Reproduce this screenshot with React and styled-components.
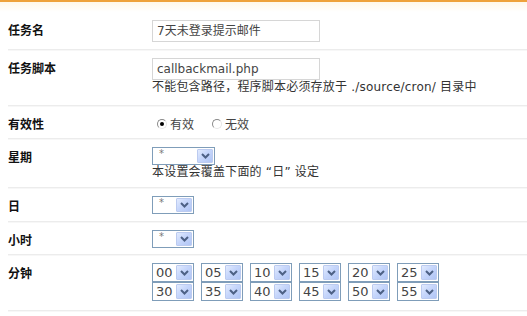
import React from 'react';
import styled, { createGlobalStyle } from 'styled-components';

const GlobalStyle = createGlobalStyle`
  html, body {
    margin: 0;
    padding: 0;
    background: #fff;
  }
  body {
    font-family: "DejaVu Sans", "Noto Sans CJK SC", sans-serif;
    font-size: 12px;
    line-height: 15px;
    color: #333;
  }
`;

const Page = styled.div`
  border-top: 2px solid #eea23c;
`;

const HeadBand = styled.div`
  height: 10px;
  background: linear-gradient(#fff8ea, #fff);
`;

const Form = styled.div`
  margin-left: 8px;
`;

const Row = styled.div`
  display: grid;
  grid-template-columns: 144px 1fr;
  align-items: start;
  padding: 8px 0 ${p => p.$pb || 7}px;
  border-top: ${p => (p.$first ? 'none' : '1px solid #ececec')};
  box-shadow: ${p => (p.$first ? 'none' : 'inset 0 1px 0 #f7f7f7')};
`;

const Label = styled.div`
  font-family: "Noto Sans CJK SC", sans-serif;
  font-weight: 700;
  font-size: 12px;
  line-height: 14px;
  height: 14px;
  color: #111;
  padding-top: 3px;
`;

const Value = styled.div`
  display: flex;
  flex-direction: column;
  align-items: flex-start;
`;

const TextInput = styled.div`
  box-sizing: border-box;
  width: 168px;
  height: 22px;
  border: 1px solid #d6d6d6;
  padding: 0 4px;
  font-family: "DejaVu Sans", "Noto Sans CJK SC", sans-serif;
  font-size: 12px;
  line-height: 20px;
  color: #444;
  white-space: nowrap;
`;

const Note = styled.div`
  font-family: "DejaVu Sans", "Noto Sans CJK SC", sans-serif;
  font-size: 12px;
  line-height: 15px;
  height: 15px;
  color: #333;
  white-space: nowrap;
  letter-spacing: 0.2px;
`;

const RadioGroup = styled.div`
  display: flex;
  align-items: center;
  gap: 18px;
  margin-left: 5px;
  padding-top: 2px;
  height: 15px;
`;

const RadioItem = styled.label`
  display: flex;
  align-items: center;
  gap: 3px;
  font-family: "Noto Sans CJK SC", sans-serif;
  font-size: 12px;
  line-height: 14px;
  height: 14px;
  color: #444;
`;

const RadioDot = styled.span`
  position: relative;
  box-sizing: border-box;
  width: 10px;
  height: 10px;
  border-radius: 50%;
  border: 1px solid;
  border-color: #8a8a8a #e6e6e6 #e6e6e6 #8a8a8a;
  background: #fff;
  &::after {
    content: '';
    display: ${p => (p.$on ? 'block' : 'none')};
    position: absolute;
    left: 2px;
    top: 2px;
    width: 4px;
    height: 4px;
    border-radius: 50%;
    background: #000;
  }
`;

const SelectBox = styled.div`
  box-sizing: border-box;
  width: ${p => p.$w}px;
  height: ${p => p.$h}px;
  border: 1px solid #7f9db9;
  background: #fff;
  display: flex;
  align-items: stretch;
  padding: 1px;
`;

const SelectText = styled.span`
  flex: 1;
  font-family: "DejaVu Sans", sans-serif;
  font-size: ${p => (p.$big ? 13 : 10)}px;
  line-height: ${p => (p.$big ? 15 : 9)}px;
  color: ${p => (p.$big ? '#444' : '#777')};
  padding-left: ${p => (p.$big ? 2 : 5)}px;
`;

const ArrowBtn = styled.span`
  box-sizing: border-box;
  width: 16px;
  border: 1px solid #bccbf0;
  border-radius: 1px;
  background: linear-gradient(135deg, #e2ebfe 0%, #c6d6fb 45%, #b0c5f5 100%);
  display: flex;
  align-items: center;
  justify-content: center;
`;

const MinuteGrid = styled.div`
  display: grid;
  grid-template-columns: repeat(6, 42px);
  column-gap: 7px;
  row-gap: 0;
`;

function Chevron() {
  return (
    <svg width="9" height="6" viewBox="0 0 9 6">
      <path d="M1 1 L4.5 4.5 L8 1" fill="none" stroke="#4d6185" strokeWidth="2" />
    </svg>
  );
}

function Select({ w, h, value, big }) {
  return (
    <SelectBox $w={w} $h={h}>
      <SelectText $big={big}>{value}</SelectText>
      <ArrowBtn>
        <Chevron />
      </ArrowBtn>
    </SelectBox>
  );
}

const minutes = ['00', '05', '10', '15', '20', '25', '30', '35', '40', '45', '50', '55'];

export default function App() {
  return (
    <Page>
      <GlobalStyle />
      <HeadBand />
      <Form>
        <Row $first>
          <Label>任务名</Label>
          <Value>
            <TextInput>7天未登录提示邮件</TextInput>
          </Value>
        </Row>
        <Row $pb={10}>
          <Label>任务脚本</Label>
          <Value>
            <TextInput>callbackmail.php</TextInput>
            <Note>不能包含路径，程序脚本必须存放于 ./source/cron/ 目录中</Note>
          </Value>
        </Row>
        <Row>
          <Label>有效性</Label>
          <Value>
            <RadioGroup>
              <RadioItem><RadioDot $on />有效</RadioItem>
              <RadioItem><RadioDot />无效</RadioItem>
            </RadioGroup>
          </Value>
        </Row>
        <Row>
          <Label>星期</Label>
          <Value>
            <Select w={63} h={18} value="*" />
            <Note>本设置会覆盖下面的 “日” 设定</Note>
          </Value>
        </Row>
        <Row>
          <Label>日</Label>
          <Value>
            <Select w={42} h={18} value="*" />
          </Value>
        </Row>
        <Row $pb={6}>
          <Label>小时</Label>
          <Value>
            <Select w={42} h={18} value="*" />
          </Value>
        </Row>
        <Row $pb={9}>
          <Label>分钟</Label>
          <Value>
            <MinuteGrid>
              {minutes.map(m => (
                <Select key={m} w={42} h={19} value={m} big />
              ))}
            </MinuteGrid>
          </Value>
        </Row>
        <Row />
      </Form>
    </Page>
  );
}
